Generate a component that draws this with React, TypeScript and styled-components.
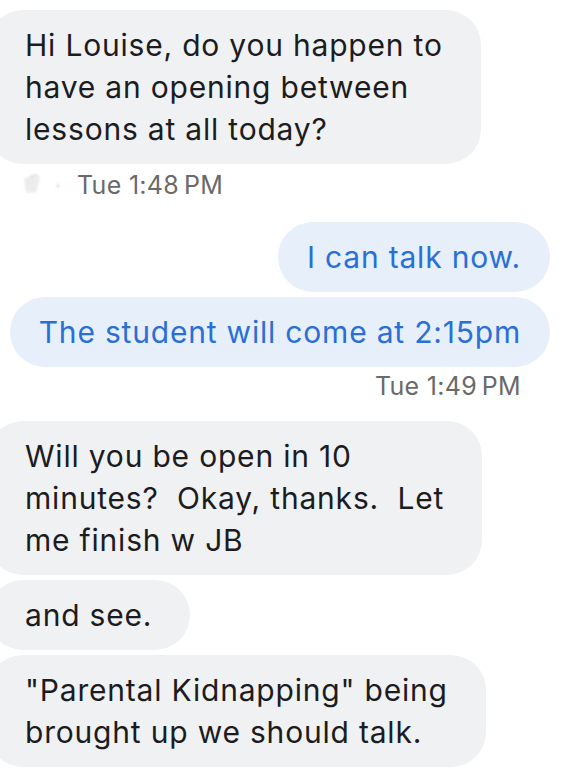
import React from "react";
import styled, { createGlobalStyle } from "styled-components";

type Message =
  | { kind: "in" | "out"; lines: string[] }
  | { kind: "time"; side: "left" | "right"; label: string; faded?: boolean };

const thread: Message[] = [
  {
    kind: "in",
    lines: ["Hi Louise, do you happen to", "have an opening between", "lessons at all today?"],
  },
  { kind: "time", side: "left", label: "Tue 1:48\u2009PM", faded: true },
  { kind: "out", lines: ["I can talk now."] },
  { kind: "out", lines: ["The student will come at 2:15pm"] },
  { kind: "time", side: "right", label: "Tue 1:49\u2009PM" },
  {
    kind: "in",
    lines: ["Will you be open in 10", "minutes?\u00a0 Okay, thanks.\u00a0 Let", "me finish w JB"],
  },
  { kind: "in", lines: ["and see."] },
  { kind: "in", lines: ['"Parental Kidnapping" being', "brought up we should talk."] },
];

export default function App() {
  return (
    <>
      <GlobalStyle />
      <Thread>
        {thread.map((m, i) => {
          if (m.kind === "time") {
            return (
              <Stamp key={i} $side={m.side}>
                {m.faded && <FadedAvatar />}
                <span>{m.label}</span>
              </Stamp>
            );
          }
          return (
            <Bubble key={i} $out={m.kind === "out"}>
              {m.lines.map((line, j) => (
                <React.Fragment key={j}>
                  {j > 0 && <br />}
                  {line}
                </React.Fragment>
              ))}
            </Bubble>
          );
        })}
      </Thread>
    </>
  );
}

function FadedAvatar() {
  return (
    <AvatarMark width="44" height="22" viewBox="0 0 44 22">
      <path d="M4 4 L12 2 L20 5 L16 18 L6 19 Z" fill="#ececec" />
      <path d="M10 3 L15 1 L19 3" stroke="#dcdcdc" strokeWidth="1.5" fill="none" />
      <circle cx="38" cy="12" r="1.4" fill="#d4d4d4" />
    </AvatarMark>
  );
}

const GlobalStyle = createGlobalStyle`
  html, body {
    margin: 0;
    padding: 0;
    background: #ffffff;
  }
  body {
    font-family: Inter, "Liberation Sans", Arial, sans-serif;
    -webkit-font-smoothing: antialiased;
  }
`;

const Thread = styled.main`
  display: flex;
  flex-direction: column;
  gap: 5px;
  padding: 10px 28px 0 0;
  width: 578px;
  height: 768px;
  box-sizing: border-box;
  overflow: hidden;
`;

const Bubble = styled.div<{ $out: boolean }>`
  align-self: ${(p) => (p.$out ? "flex-end" : "flex-start")};
  margin-left: ${(p) => (p.$out ? "0" : "-12px")};
  padding: ${(p) => (p.$out ? "14px 29px" : "14px 38px 14px 37px")};
  border-radius: 35px;
  background: ${(p) => (p.$out ? "#e7effb" : "#eff1f3")};
  color: ${(p) => (p.$out ? "#2a6fd6" : "#1c1c1e")};
  font-size: 30px;
  line-height: 42px;
  letter-spacing: 0.8px;
  white-space: nowrap;
  flex-shrink: 0;
`;

const Stamp = styled.div<{ $side: "left" | "right" }>`
  display: flex;
  align-items: center;
  align-self: ${(p) => (p.$side === "right" ? "flex-end" : "flex-start")};
  margin: ${(p) => (p.$side === "right" ? "-1px 29px 15px 0" : "1px 0 17px 20px")};
  color: #6a6a6a;
  font-size: 25px;
  line-height: 30px;
  letter-spacing: 0.3px;
`;

const AvatarMark = styled.svg`
  display: block;
  margin-right: 13px;
  filter: blur(1px);
`;
